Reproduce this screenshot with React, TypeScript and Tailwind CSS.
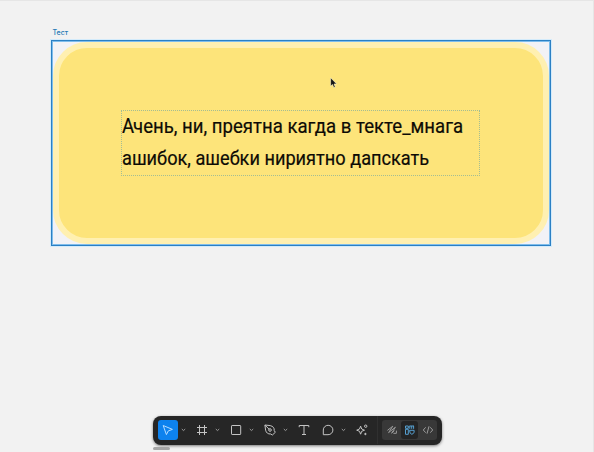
import React from "react";

function Icon({ children, className = "w-[12px]" }: { children: React.ReactNode; className?: string }) {
  return (
    <span className={`flex shrink-0 items-center justify-center ${className}`}>
      <svg width="12" height="12" viewBox="0 0 12 12" fill="none" stroke="currentColor" strokeWidth="1" strokeLinejoin="round">
        {children}
      </svg>
    </span>
  );
}

function Chevron({ className }: { className: string }) {
  return (
    <span className={`flex w-[5px] shrink-0 justify-center text-[#999999] ${className}`}>
      <svg width="5" height="4" viewBox="0 0 5 4" fill="none" stroke="currentColor">
        <path d="M.8 1 2.5 2.6 4.2 1" />
      </svg>
    </span>
  );
}

function Toolbar() {
  return (
    <div className="flex h-[29px] w-[289px] items-center rounded-[8px] bg-[#262626] pb-px pl-[5px] text-[#c4c4c4] shadow-[0_1px_3px_rgba(0,0,0,0.5)]">
      <span className="flex h-[20px] w-[20px] shrink-0 items-center justify-center rounded-[3px] bg-[#0d82ee] text-[#b5dcff]">
        <Icon>
          <path d="M1.2 1.5 4.4 10.6 6.3 6.9 10.4 5.4Z" />
        </Icon>
      </span>
      <Chevron className="ml-[3px]" />
      <Icon className="ml-[10px] w-[12px]">
        <path d="M3.5 1v10M8.5 1v10M1 3.5h10M1 8.5h10" />
      </Icon>
      <Chevron className="ml-[7px]" />
      <Icon className="ml-[10px] w-[12px]">
        <rect x="1.5" y="1.5" width="9.2" height="9" rx=".6" />
      </Icon>
      <Chevron className="ml-[7px]" />
      <Icon className="ml-[10px] w-[12px]">
        <path d="M.9 1 6.2 1.6C9 2.2 10.5 4 10.2 6.5L11.3 8.3 8.4 11 6.7 10C4 10.2 2.2 8.8 1.6 6.2ZM1 1.1 5.2 5.3" />
        <circle cx="6" cy="6" r="1.3" />
      </Icon>
      <Chevron className="ml-[7px]" />
      <Icon className="ml-[10px] w-[12px]">
        <path d="M1.2 3.2V1.5h9.6v1.7M6 1.5v9M4 10.5h4" />
      </Icon>
      <Icon className="ml-[12px] w-[12px]">
        <path d="M1.3 10.7V6A4.8 4.7 0 1 1 6 10.7Z" />
      </Icon>
      <Chevron className="ml-[7px]" />
      <Icon className="ml-[10px] w-[12px]">
        <path d="M4.6 2.1 5.7 5 8.5 6.2 5.7 7.3 4.6 10.2 3.5 7.3.7 6.2 3.5 5Z" />
        <circle cx="9.7" cy="2.2" r="1.2" />
        <circle cx="9.4" cy="10" r=".7" fill="currentColor" />
      </Icon>
      <span className="ml-[9px] h-[28px] w-px bg-[#303030]" />
      <div className="ml-[4px] flex h-[20px] w-[55px] items-center rounded-[3px] bg-[#383838] text-[#9b9b9b]">
        <Icon className="w-[19px]">
          <path d="M1.4 6.4 6.8 2.2 2.6 8.6 9.4 3.2 5.6 9.2 8.4 6.6M7.4 9.3h3V6.6" />
        </Icon>
        <span className="flex h-[18px] w-[17px] items-center justify-center rounded-[3px] bg-[#242424] text-[#559fd0]">
          <Icon>
            <path d="M1.5 2h2.8v2.3H1.5ZM1.5 5.3h2.8v5H1.5ZM5.8 2v2.8M7.7 2v2.8M9.6 2v2.8M5.4 2h4.6M5.6 6.3h4.5v2.3L7.9 10.4 6 8.8Z" />
          </Icon>
        </span>
        <Icon className="w-[19px]">
          <path d="M3.7 3.3 1.3 6l2.4 2.7M8.3 3.3 10.7 6 8.3 8.7M7 2.3 5 9.7" />
        </Icon>
      </div>
    </div>
  );
}

export default function App() {
  return (
    <main className="relative flex h-[452px] w-[594px] flex-col overflow-hidden border-r border-t border-[#e6e6e6] bg-[#f2f2f2] pt-[26px] font-[Inter,sans-serif]">
      <div className="ml-[52.5px] h-[13px] text-[7px] font-medium leading-[11px] text-[#2479b5]">Тест</div>
      <section className="ml-[51px] h-[206px] w-[500px] shrink-0 border border-[#2b80c4] bg-[#f2f2f6] shadow-[inset_0_0_0_1px_#7fbdec,0_0_0_1px_#d3ebfb]">
        <div className="p-px">
          <div className="h-[202px] w-[496px] rounded-[34px] border-[6px] border-[#fff0b1] bg-[#fde47a] pl-[62px] pt-[62px]">
            <div className="h-[66px] w-[359px] border border-dotted border-[#a3bd94] font-[Roboto,sans-serif] text-[20px] leading-[32px] text-[#0d0b05] [-webkit-text-stroke:0.2px_#0d0b05]">
              <p className="-mt-px w-max origin-left scale-x-[0.929] whitespace-nowrap">Ачень, ни, преятна кагда в текте_мнага</p>
              <p className="w-max origin-left scale-x-[0.909] whitespace-nowrap">ашибок, ашебки нириятно дапскать</p>
            </div>
          </div>
        </div>
      </section>
      <div className="ml-[153px] mt-[170px]">
        <Toolbar />
        <div className="mt-[2px] h-[3px] w-[17px] rounded-full bg-[#a6a6a6]" />
      </div>
      <svg className="absolute left-[330px] top-[76px]" width="8" height="12" viewBox="0 0 8 12">
        <path d="M.6.7v8.5l1.9-1.7 1.3 3.1 1.5-.6L4 7h2.7Z" fill="#141414" stroke="#fff8cf" strokeWidth=".6" />
      </svg>
    </main>
  );
}
